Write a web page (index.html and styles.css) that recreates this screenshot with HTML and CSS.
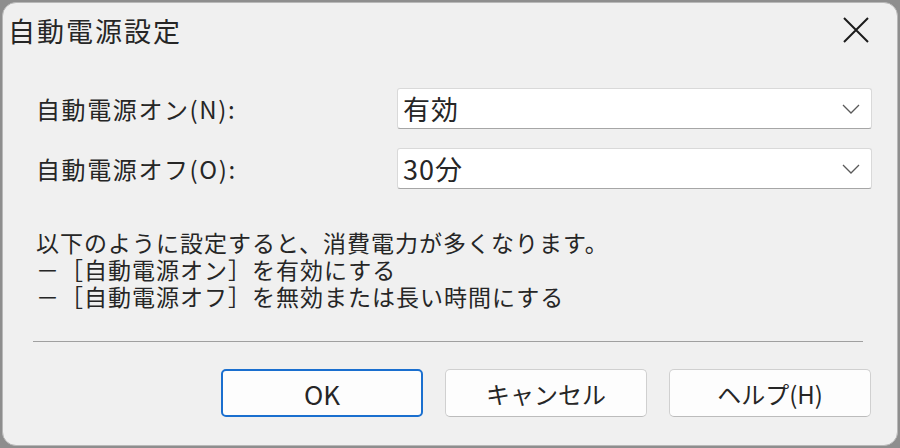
FILE: index.html
```html
<!DOCTYPE html>
<html lang="ja">
<head>
    <meta charset="UTF-8">
    <meta name="viewport" content="width=device-width, initial-scale=1.0">
    <title>自動電源設定</title>
    <link rel="stylesheet" href="styles.css">
</head>
<body>
<div class="dialog">
    <div class="titlebar">
        <span class="title">自動電源設定</span>
        <svg class="close" width="26" height="26" viewBox="0 0 26 26">
            <path d="M1 1 L25 25 M25 1 L1 25" stroke="#1b1b1b" stroke-width="2" fill="none"/>
        </svg>
    </div>

    <div class="fields">
        <label class="field-label">自動電源オン(N):</label>
        <div class="combo">
            <span class="combo-value">有効</span>
            <svg class="chevron" width="18" height="10" viewBox="0 0 18 10">
                <polyline points="1,1 9,9 17,1" stroke="#5a5a5a" stroke-width="1.3" fill="none"/>
            </svg>
        </div>

        <label class="field-label">自動電源オフ(O):</label>
        <div class="combo">
            <span class="combo-value">30分</span>
            <svg class="chevron" width="18" height="10" viewBox="0 0 18 10">
                <polyline points="1,1 9,9 17,1" stroke="#5a5a5a" stroke-width="1.3" fill="none"/>
            </svg>
        </div>
    </div>

    <div class="note">
        <p>以下のように設定すると、消費電力が多くなります。</p>
        <p>－［自動電源オン］を有効にする</p>
        <p>－［自動電源オフ］を無効または長い時間にする</p>
    </div>

    <hr class="separator">

    <div class="buttons">
        <button type="button" class="btn btn-default">OK</button>
        <button type="button" class="btn">キャンセル</button>
        <button type="button" class="btn">ヘルプ(H)</button>
    </div>
</div>
</body>
</html>
```

FILE: styles.css
```css
html, body {
    margin: 0;
    height: 100%;
}

body {
    padding: 2px;
    box-sizing: border-box;
    background-color: #8e8e8e;
    font-family: "Noto Sans CJK JP", "Noto Sans", sans-serif;
    color: #262626;
}

.dialog {
    height: 100%;
    box-sizing: border-box;
    border: 1px solid #b8b8b8;
    border-radius: 14px;
    background-color: #f0f0f0;
    overflow: hidden;
}

.titlebar {
    height: 54px;
    display: flex;
    align-items: center;
    justify-content: space-between;
    padding: 0 28px 0 5px;
}

.title {
    font-size: 27px;
    letter-spacing: 2px;
}

.fields {
    display: grid;
    grid-template-columns: 1fr 475px;
    row-gap: 19px;
    align-items: center;
    margin-top: 31px;
    padding: 0 25px 0 33px;
}

.field-label {
    font-size: 24px;
    letter-spacing: 1.6px;
}

.combo {
    height: 41px;
    box-sizing: border-box;
    display: flex;
    align-items: center;
    justify-content: space-between;
    padding: 0 11px 0 5px;
    background-color: #fff;
    border: 1px solid #d9d9d9;
    border-bottom-color: #a6a6a6;
    border-radius: 3px;
}

.combo-value {
    font-size: 27px;
    letter-spacing: 1px;
}

.note {
    margin-top: 40px;
    padding-left: 33px;
    font-size: 23px;
    line-height: 27px;
    letter-spacing: 1px;
}

.note p {
    margin: 0;
}

.separator {
    margin: 31px 34px 0 30px;
    border: none;
    border-top: 1px solid #a0a0a0;
    height: 0;
}

.buttons {
    display: flex;
    justify-content: flex-end;
    gap: 22px;
    margin-top: 27px;
    padding-right: 26px;
}

.btn {
    width: 202px;
    height: 48px;
    font-family: inherit;
    font-size: 24px;
    color: #262626;
    background-color: #fdfdfd;
    border: 1px solid #d0d0d0;
    border-bottom-color: #bcbcbc;
    border-radius: 5px;
}

.btn-default {
    border: 2px solid #1a6fcf;
    font-size: 26px;
}
```
